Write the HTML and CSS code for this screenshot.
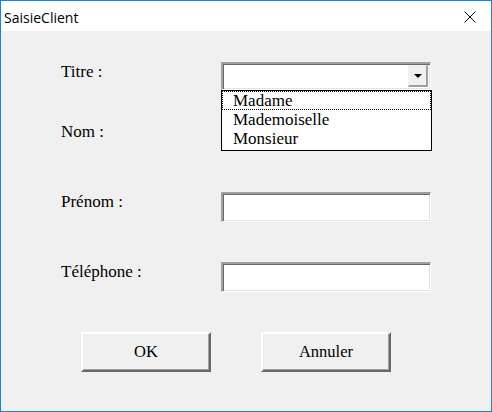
FILE: index.html
```html
<!DOCTYPE html>
<html lang="fr">
<head>
<meta charset="utf-8">
<title>SaisieClient</title>
<link rel="stylesheet" href="styles.css">
</head>
<body>
<div class="window">
  <div class="titlebar">
    <span class="title">SaisieClient</span>
    <svg class="close" width="12" height="12" viewBox="0 0 12 12" aria-hidden="true">
      <path d="M0.5 0.5 L11.5 11.5 M11.5 0.5 L0.5 11.5" stroke="#000" stroke-width="1" fill="none"/>
    </svg>
  </div>
  <div class="content">
    <div class="form">
      <div class="row row-first">
        <span class="label">Titre :</span>
        <div class="combo">
          <div class="combo-btn">
            <svg width="8" height="4" viewBox="0 0 8 4" aria-hidden="true"><polygon points="0,0 8,0 4,4" fill="#000"/></svg>
          </div>
          <ul class="list">
            <li class="item focused">Madame</li>
            <li class="item">Mademoiselle</li>
            <li class="item">Monsieur</li>
          </ul>
        </div>
      </div>
      <div class="row">
        <span class="label">Nom :</span>
        <div class="slot"></div>
      </div>
      <div class="row">
        <span class="label">Prénom :</span>
        <div class="textbox"></div>
      </div>
      <div class="row">
        <span class="label">Téléphone :</span>
        <div class="textbox"></div>
      </div>
    </div>
    <div class="buttons">
      <div class="btn">OK</div>
      <div class="btn">Annuler</div>
    </div>
  </div>
</div>
</body>
</html>
```
FILE: styles.css
```css
* { box-sizing: border-box; }
html, body { margin: 0; padding: 0; }
body { width: 492px; height: 412px; overflow: hidden; background: #f0f0f0; }

.window {
  width: 492px;
  height: 412px;
  border: 1px solid #1883d7;
  background: #f0f0f0;
  display: flex;
  flex-direction: column;
}

.titlebar {
  height: 30px;
  background: #fff;
  display: flex;
  align-items: center;
  justify-content: space-between;
  padding: 2px 15px 0 3px;
  flex: none;
}
.title {
  font-family: "Open Sans", "Noto Sans", sans-serif;
  font-size: 14px;
  color: #000;
}
.close { display: block; margin-top: -1px; }

.content {
  padding: 31px 0 0 60px;
  font-family: "Liberation Serif", "Times New Roman", serif;
  font-size: 17px;
  color: #000;
}

.form { display: flex; flex-direction: column; }
.row {
  display: flex;
  align-items: flex-start;
  height: 30px;
  margin-bottom: 40px;
}
.row-first { margin-bottom: 30px; }
.label {
  width: 160px;
  line-height: 19px;
  flex: none;
}
.slot { width: 210px; height: 30px; }

.textbox {
  width: 210px;
  height: 30px;
  background: #fff;
  border-style: solid;
  border-width: 2px 1px 1px 2px;
  border-color: #a0a0a0 #fff #fff #a0a0a0;
  box-shadow: inset 1px 1px 0 #696969, inset -1px -1px 0 #e3e3e3;
}

.combo {
  position: relative;
  width: 210px;
  height: 28px;
  background: #fff;
  border-style: solid;
  border-width: 2px 1px 1px 2px;
  border-color: #a0a0a0 #fff #fff #a0a0a0;
  box-shadow: inset 1px 1px 0 #696969, inset -1px -1px 0 #e3e3e3;
  display: flex;
  justify-content: flex-end;
  padding: 1px 2px 2px 1px;
}
.combo-btn {
  width: 20px;
  height: 22px;
  background: #f0f0f0;
  border-style: solid;
  border-width: 1px 2px 2px 1px;
  border-color: #f0f0f0 #a0a0a0 #a0a0a0 #f0f0f0;
  display: flex;
  align-items: center;
  justify-content: center;
  padding-top: 1px;
}
.combo-btn svg { display: block; }

.list {
  position: absolute;
  left: -2px;
  top: 26px;
  width: 211px;
  margin: 0;
  padding: 0 0 2px 0;
  list-style: none;
  background: #fff;
  border: 1px solid #000;
  z-index: 2;
}
.item {
  height: 19px;
  line-height: 19px;
  padding-left: 11px;
  white-space: nowrap;
}
.item.focused {
  outline: 1px dotted #000;
  outline-offset: -1px;
}

.buttons {
  display: flex;
  gap: 50px;
  margin-left: 20px;
}
.btn {
  width: 130px;
  height: 40px;
  background: #f0f0f0;
  border-style: solid;
  border-width: 2px;
  border-color: #fff #696969 #696969 #fff;
  box-shadow: inset -1px -1px 0 #a0a0a0;
  display: flex;
  align-items: center;
  justify-content: center;
  font-size: 16.5px;
}
```
